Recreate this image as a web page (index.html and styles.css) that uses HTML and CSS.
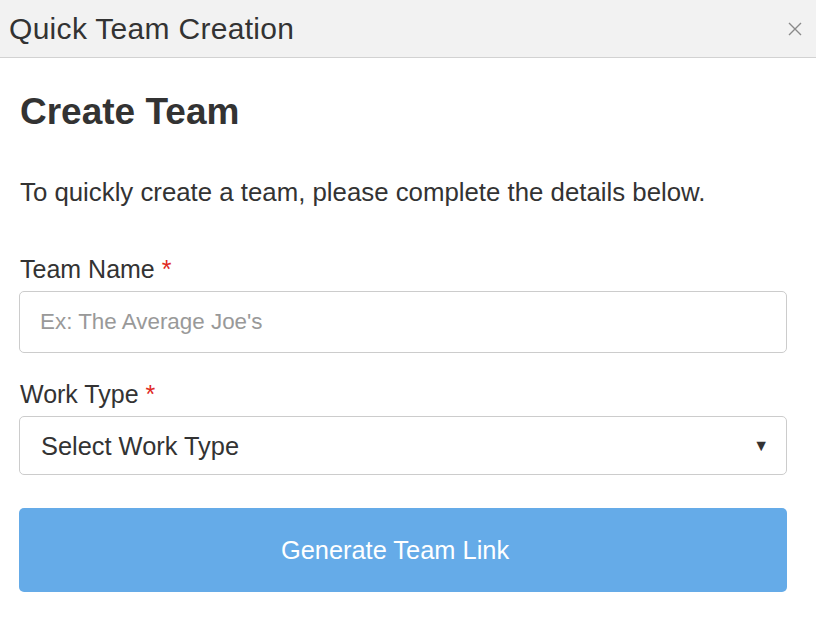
FILE: index.html
```html
<!DOCTYPE html>
<html lang="en">
<head>
    <meta charset="UTF-8">
    <meta name="viewport" content="width=device-width, initial-scale=1.0">
    <title>Quick Team Creation</title>
    <link rel="stylesheet" href="styles.css">
</head>
<body>
    <div class="modal-header">
        <span class="modal-title">Quick Team Creation</span>
        <button class="close" aria-label="Close">
            <svg width="14" height="14" viewBox="0 0 14 14">
                <path d="M1 1 L13 13 M13 1 L1 13" stroke="#8a8a8a" stroke-width="1.4" fill="none" />
            </svg>
        </button>
    </div>

    <div class="modal-body">
        <h2>Create Team</h2>
        <p class="intro">To quickly create a team, please complete the details below.</p>

        <div class="field">
            <label for="teamName">Team Name <span class="req">*</span></label>
            <input type="text" id="teamName" class="input" placeholder="Ex: The Average Joe's" />
        </div>

        <div class="field field-second">
            <label for="workType">Work Type <span class="req">*</span></label>
            <div class="select-wrap">
                <select id="workType" class="input select">
                    <option>Select Work Type</option>
                </select>
                <span class="caret">&#9660;</span>
            </div>
        </div>

        <button class="btn-primary">Generate Team Link</button>
    </div>
</body>
</html>
```

FILE: styles.css
```css
body {
    margin: 0;
    font-family: "Liberation Sans", Arial, Helvetica, sans-serif;
    color: #333;
    background: #fff;
}
.modal-header {
    display: flex;
    align-items: center;
    justify-content: space-between;
    height: 57px;
    padding: 0 14px 0 9px;
    background-color: #f2f2f2;
    border-bottom: 1px solid #d2d2d2;
}
.modal-title {
    font-size: 30px;
    line-height: 57px;
    letter-spacing: 0.3px;
    color: #333;
}
.close {
    display: flex;
    padding: 0;
    margin-top: 1px;
    border: none;
    background: none;
    cursor: pointer;
}
.modal-body {
    padding: 32px 29px 0 19px;
}
h2 {
    margin: 0;
    padding-left: 1px;
    font-size: 37px;
    line-height: 44px;
    font-weight: bold;
    color: #333;
}
.intro {
    margin: 43px 0 0;
    padding-left: 1px;
    font-size: 25.8px;
    line-height: 30px;
}
.field {
    margin-top: 47px;
}
.field-second {
    margin-top: 26px;
}
label {
    display: block;
    padding-left: 1px;
    margin-bottom: 7px;
    font-size: 25px;
    line-height: 30px;
}
.req {
    color: #e0291f;
}
.input {
    display: block;
    box-sizing: border-box;
    width: 100%;
    height: 62px;
    padding: 0 20px;
    font-family: inherit;
    font-size: 22.4px;
    color: #333;
    background: #fff;
    border: 1px solid #cccccc;
    border-radius: 5px;
    outline: none;
}
.input::placeholder {
    color: #999;
}
.select-wrap {
    position: relative;
}
.select {
    height: 59px;
    padding: 0 21px;
    font-size: 25.4px;
    appearance: none;
    -webkit-appearance: none;
}
.caret {
    position: absolute;
    right: 18px;
    top: 50%;
    transform: translateY(-50%);
    font-size: 16px;
    color: #333;
    pointer-events: none;
}
.btn-primary {
    display: block;
    width: 100%;
    height: 84px;
    margin-top: 33px;
    padding: 0 16px 0 0;
    font-family: inherit;
    font-size: 25.4px;
    color: #fff;
    background-color: #65abe8;
    border: none;
    border-radius: 5px;
    cursor: pointer;
}
```
